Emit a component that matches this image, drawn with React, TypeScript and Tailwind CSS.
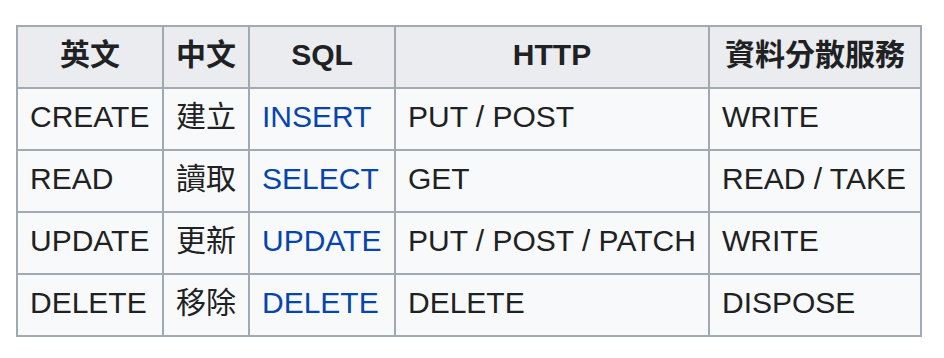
const rows = [
  { en: "CREATE", zh: "建立", sql: "INSERT", http: "PUT / POST", dds: "WRITE" },
  { en: "READ", zh: "讀取", sql: "SELECT", http: "GET", dds: "READ / TAKE" },
  { en: "UPDATE", zh: "更新", sql: "UPDATE", http: "PUT / POST / PATCH", dds: "WRITE" },
  { en: "DELETE", zh: "移除", sql: "DELETE", http: "DELETE", dds: "DISPOSE" },
];

const headers = ["英文", "中文", "SQL", "HTTP", "資料分散服務"];

export default function App() {
  return (
    <div className="w-[944px] h-[358px] bg-white pt-[25px] pl-[16px]">
      <table
        className="table-fixed border-collapse border-2 border-[#a2a9b1] text-[30px] leading-none text-[#202122] w-[904px]"
        style={{ fontFamily: '"Liberation Sans", Arial, "Noto Sans CJK TC", sans-serif' }}
      >
        <colgroup>
          <col className="w-[146px]" />
          <col className="w-[86px]" />
          <col className="w-[146px]" />
          <col className="w-[314px]" />
          <col className="w-[212px]" />
        </colgroup>
        <thead>
          <tr className="h-[62px] bg-[#eaecf0]">
            {headers.map((h) => (
              <th key={h} className="border-2 border-[#a2a9b1] px-[12px] pt-0 pb-[4px] font-bold text-center whitespace-nowrap">
                {h}
              </th>
            ))}
          </tr>
        </thead>
        <tbody>
          {rows.map((r) => (
            <tr key={r.en} className="h-[62px] bg-[#f8f9fa]">
              <td className="border-2 border-[#a2a9b1] px-[12px] pt-0 pb-[4px] whitespace-nowrap">{r.en}</td>
              <td className="border-2 border-[#a2a9b1] px-[12px] pt-0 pb-[4px] whitespace-nowrap">{r.zh}</td>
              <td className="border-2 border-[#a2a9b1] px-[12px] pt-0 pb-[4px] whitespace-nowrap">
                <a href="#" className="text-[#0645ad] no-underline">{r.sql}</a>
              </td>
              <td className="border-2 border-[#a2a9b1] px-[12px] pt-0 pb-[4px] whitespace-nowrap">{r.http}</td>
              <td className="border-2 border-[#a2a9b1] px-[12px] pt-0 pb-[4px] whitespace-nowrap">{r.dds}</td>
            </tr>
          ))}
        </tbody>
      </table>
    </div>
  );
}
